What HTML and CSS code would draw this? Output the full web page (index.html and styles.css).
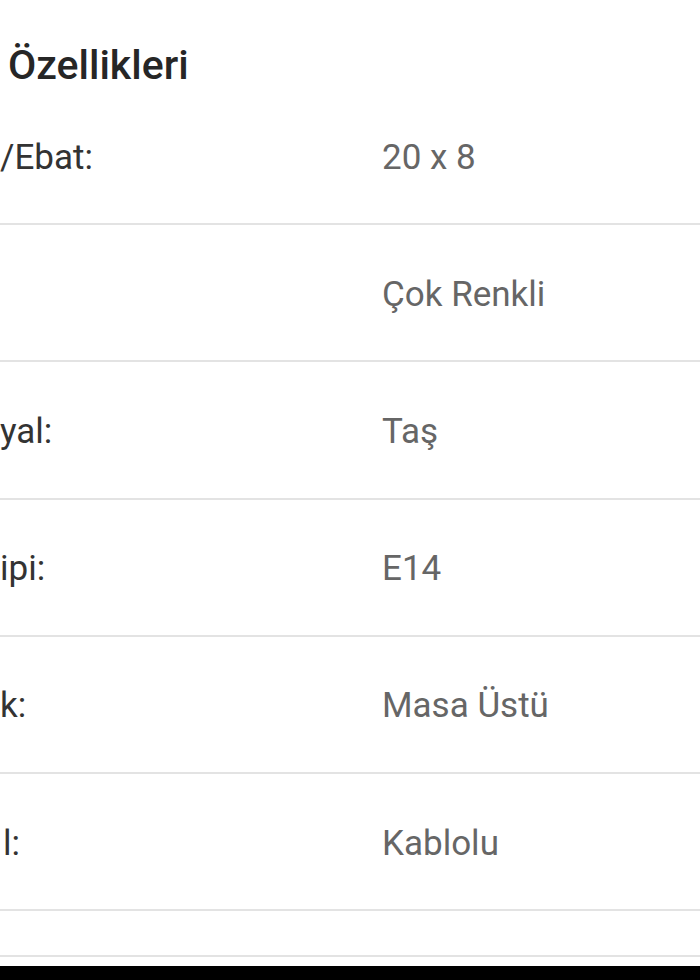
FILE: index.html
```html
<!DOCTYPE html>
<html lang="tr">
<head>
<meta charset="utf-8">
<title>Özellikleri</title>
<link rel="stylesheet" href="styles.css">
</head>
<body>
<div class="page">
  <h2 class="title">Özellikleri</h2>
  <div class="specs">
    <div class="row"><span class="label">/Ebat:</span><span class="value">20 x 8</span></div>
    <div class="row"><span class="label"></span><span class="value">Çok Renkli</span></div>
    <div class="row"><span class="label">yal:</span><span class="value">Taş</span></div>
    <div class="row"><span class="label">ipi:</span><span class="value">E14</span></div>
    <div class="row"><span class="label">k:</span><span class="value">Masa Üstü</span></div>
    <div class="row"><span class="label label-l">l:</span><span class="value">Kablolu</span></div>
    <div class="row row-empty"></div>
  </div>
  <div class="spacer"></div>
  <div class="navbar"></div>
</div>
</body>
</html>
```

FILE: styles.css
```css
html, body {
  margin: 0;
  padding: 0;
  background: #ffffff;
}

.page {
  width: 700px;
  height: 980px;
  overflow: hidden;
  display: flex;
  flex-direction: column;
  font-family: Roboto, "Noto Sans", "Liberation Sans", sans-serif;
}

.title {
  margin: 0;
  padding: 45px 0 3px 8px;
  font-size: 41px;
  line-height: 40px;
  font-weight: 500;
  color: #262626;
}

.specs {
  display: flex;
  flex-direction: column;
}

.row {
  display: grid;
  grid-template-columns: 382px 1fr;
  align-items: center;
  box-sizing: border-box;
  height: 137.2px;
  padding-top: 4px;
  border-bottom: 2px solid #e3e3e3;
  font-size: 35px;
  line-height: 40px;
}

.label {
  color: #333333;
}

.label-l {
  padding-left: 3px;
}

.value {
  color: #666666;
}

.row-empty {
  height: 46px;
}

.spacer {
  height: 9px;
}

.navbar {
  flex: 1;
  background: #000000;
}
```
